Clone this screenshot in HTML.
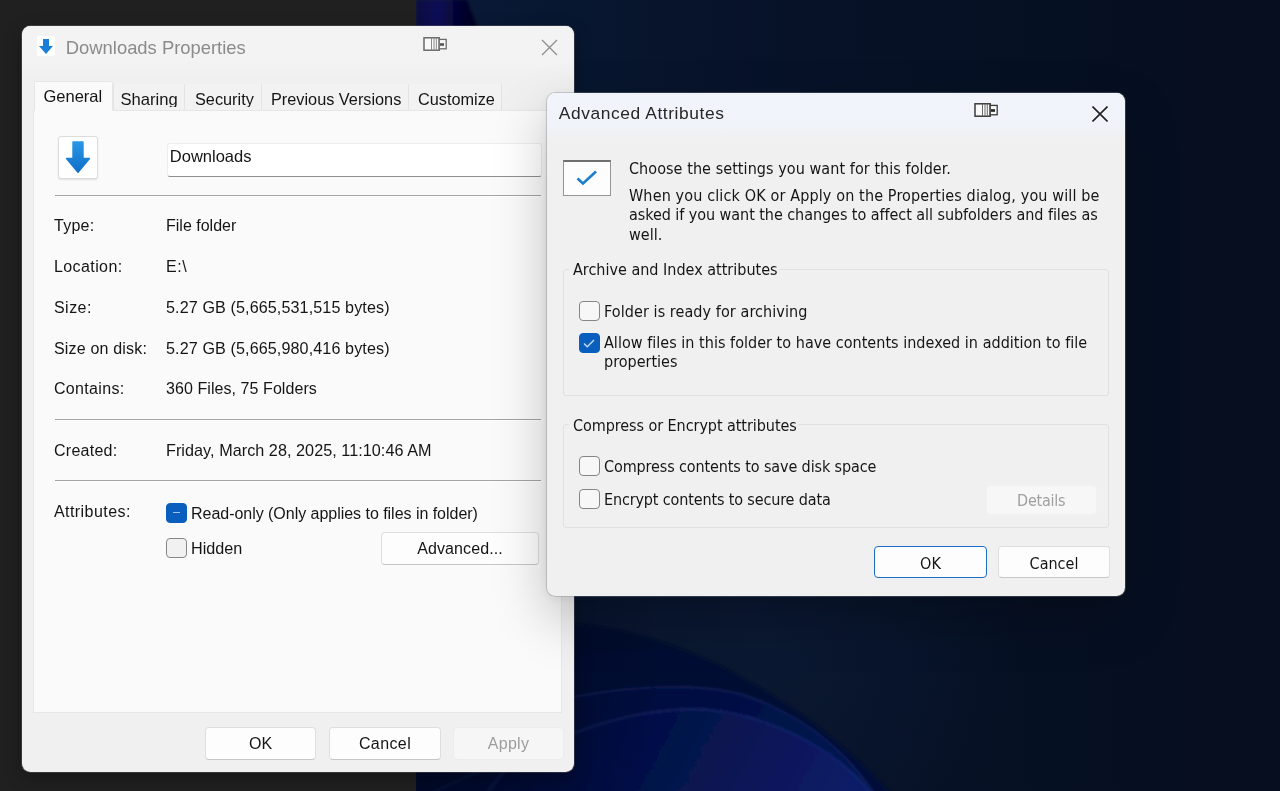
<!DOCTYPE html>
<html lang="en">
<head>
<meta charset="utf-8">
<title>Downloads Properties</title>
<style>
html,body{margin:0;padding:0;}
body{width:1280px;height:791px;overflow:hidden;position:relative;background:#202020;font-family:"Liberation Sans",sans-serif;font-size:16px;color:#151515;}
.abs{position:absolute;}
#wall{position:absolute;left:416px;top:0;width:864px;height:791px;background:#061025;overflow:hidden;}
.t{position:absolute;white-space:nowrap;line-height:20px;font-size:16px;}
.tv{font-family:"DejaVu Sans Condensed","DejaVu Sans",sans-serif;font-stretch:condensed;}
/* properties dialog */
#prop{will-change:transform;position:absolute;left:22px;top:26px;width:552px;height:746px;background:#f0f0f0;border-radius:8.500px;box-shadow:0 0 0 1px rgba(128,128,128,.30),0 6px 18px rgba(0,0,0,.32);overflow:hidden;}
#pane{position:absolute;left:11px;top:84px;width:529px;height:603px;background:#fafafa;border:1px solid #e6e6e6;box-sizing:border-box;}
.tab{position:absolute;top:58px;height:26px;border-left:1px solid #e4e4e4;box-sizing:border-box;background:#f2f2f2;}
.tab i{position:absolute;left:0;top:0;right:0;height:22.5px;overflow:hidden;font-style:normal;}
.tab .t{font-size:16.3px;}
.btn{position:absolute;box-sizing:border-box;background:#fdfdfd;border:1px solid #dedede;border-bottom-color:#c6c6c6;border-radius:4px;text-align:center;}
.cb{position:absolute;width:20.600px;height:20.200px;box-sizing:border-box;border-radius:4px;border:1.200px solid #868686;background:#f1f1f1;}
.cb.on{background:#0a5fbe;border-color:#0a5fbe;}
.hr{position:absolute;height:1px;background:#a3a3a3;left:33px;width:485.500px;box-shadow:0 1px 0 #fff;}
/* advanced dialog */
#adv{will-change:transform;position:absolute;left:547px;top:93px;width:578px;height:503px;background:#f0f0f0;border-radius:8.500px;box-shadow:0 0 0 1px rgba(125,130,140,.36),0 22px 54px rgba(0,0,0,.23),0 2px 12px rgba(0,0,0,.07);overflow:hidden;}
.grp{position:absolute;box-sizing:border-box;border:1px solid #e1e1e1;border-radius:3px;}
</style>
</head>
<body>
<div id="wall">
<svg width="864" height="791" viewBox="416 0 864 791" style="position:absolute;left:0;top:0">
<defs>
<linearGradient id="wbg" x1="0" y1="0" x2="1" y2="0"><stop offset="0" stop-color="#0a1a38"/><stop offset=".15" stop-color="#081731"/><stop offset=".35" stop-color="#07132a"/><stop offset=".6" stop-color="#061125"/><stop offset="1" stop-color="#060e1f"/></linearGradient>
<radialGradient id="wlt" gradientUnits="userSpaceOnUse" cx="760" cy="640" r="260"><stop offset="0" stop-color="#0c1b36" stop-opacity=".7"/><stop offset="1" stop-color="#0c1b36" stop-opacity="0"/></radialGradient>
<linearGradient id="wpur" gradientUnits="userSpaceOnUse" x1="416" y1="0" x2="476" y2="0"><stop offset="0" stop-color="#07073e"/><stop offset=".35" stop-color="#0b0b58"/><stop offset=".7" stop-color="#050534"/><stop offset="1" stop-color="#02021f"/></linearGradient>
<linearGradient id="wb1" x1="0" y1="0" x2="0.3" y2="1"><stop offset="0" stop-color="#050c2c"/><stop offset="1" stop-color="#060f38"/></linearGradient>
<linearGradient id="wb2" gradientUnits="userSpaceOnUse" x1="560" y1="670" x2="800" y2="830"><stop offset="0" stop-color="#040c36"/><stop offset="1" stop-color="#061450"/></linearGradient>
<linearGradient id="wb3" gradientUnits="userSpaceOnUse" x1="540" y1="690" x2="820" y2="840"><stop offset="0" stop-color="#040d3a"/><stop offset=".5" stop-color="#06124c"/><stop offset="1" stop-color="#091c66"/></linearGradient>
<linearGradient id="wdk" gradientUnits="userSpaceOnUse" x1="416" y1="0" x2="660" y2="0"><stop offset="0" stop-color="#02061c" stop-opacity=".6"/><stop offset="1" stop-color="#02061c" stop-opacity="0"/></linearGradient>
<filter id="bl" x="-10%" y="-10%" width="120%" height="120%"><feGaussianBlur stdDeviation="1.800"/></filter>
</defs>
<rect x="416" y="0" width="864" height="791" fill="url(#wbg)"/>
<rect x="416" y="380" width="864" height="411" fill="url(#wlt)"/>
<path d="M416 0H467L478 30V90H416z" fill="url(#wpur)" filter="url(#bl)"/>
<g filter="url(#bl)">
<path d="M416 640C470 620 560 617 620 630C700 648 770 690 820 728C850 752 875 775 892 795H416z" fill="url(#wb1)"/>
<path d="M416 760C480 725 540 705 574 697C610 690 640 687 672 687C700 687 725 690 740 694C770 703 795 718 813 730C840 750 860 772 875 795H416z" fill="url(#wb2)"/>
<path d="M416 760C480 725 540 705 574 697C610 690 640 687 672 687C700 687 725 690 740 694C770 703 795 718 813 730C840 750 860 772 875 795" fill="none" stroke="#2a48a8" stroke-width="1.5" opacity=".3"/>
<path d="M416 800C480 770 540 745 574 733C610 720 640 711 690 709C740 709 790 728 830 755C850 770 865 785 872 795H416z" fill="url(#wb3)"/>
<path d="M416 800C480 770 540 745 574 733C610 720 640 711 690 709C740 709 790 728 830 755C850 770 865 785 872 795" fill="none" stroke="#3555b8" stroke-width="1.500" opacity=".3"/>
</g>
<rect x="416" y="600" width="250" height="191" fill="url(#wdk)"/>
<path d="M488 791L530 740" stroke="#1a2a6a" stroke-width="3" opacity=".35" filter="url(#bl)"/>
</svg>
</div>

<div id="prop">
  <!-- title bar -->
  <div class="abs" style="left:0;top:0;width:552px;height:52px;background:linear-gradient(#f3f3f3 0,#f3f3f3 70%,#f0f0f0 100%)"></div>
  <div class="abs" style="left:15px;top:10px;width:18px;height:20px;background:#fff;border-radius:2px"></div>
  <svg class="abs" style="left:15px;top:10px" width="18" height="20" viewBox="0 0 18 20"><path d="M6 3h6v7h4l-7 8-7-8h4z" fill="#1a7fd6"/></svg>
  <div class="t" style="left:43.800px;top:12px;font-size:18.400px;color:#8b8b8b">Downloads Properties</div>
  <svg class="abs" style="left:400px;top:10px" width="26" height="16" viewBox="0 0 26 16"><rect x="2" y="1.800" width="15.200" height="12.400" fill="#fafafa" stroke="#6a6a6a" stroke-width="1.500"/><path d="M9.500 2v12M12 2v12M14.300 2v12" stroke="#8a8a8a" stroke-width="1" fill="none"/><rect x="17.200" y="3.400" width="7" height="9.400" fill="#f6f6f6" stroke="#6a6a6a" stroke-width="1.300"/><rect x="18" y="7.200" width="4" height="2.600" fill="#555"/></svg>
  <svg class="abs" style="left:519px;top:13.300px" width="17" height="17" viewBox="0 0 17 17"><path d="M1 1l15 15M16 1L1 16" stroke="#8d8d8d" stroke-width="1.3" fill="none"/></svg>

  <!-- tabs -->
  <div class="tab" style="left:91px;width:71px"><i><span class="t" style="left:6.500px;top:5.700px;font-size:16.600px">Sharing</span></i></div>
  <div class="tab" style="left:162px;width:77px"><i><span class="t" style="left:10px;top:4.700px">Security</span></i></div>
  <div class="tab" style="left:239px;width:147px"><i><span class="t" style="left:9px;top:4.700px">Previous Versions</span></i></div>
  <div class="tab" style="left:386px;width:94px;border-right:1px solid #e2e2e2"><i><span class="t" style="left:9px;top:4.700px">Customize</span></i></div>
  <div id="pane"></div>
  <div class="abs" style="left:12px;top:55px;width:79px;height:30px;background:#fafafa;border:1px solid #e6e6e6;border-bottom:none;box-sizing:border-box;border-radius:2px 2px 0 0"></div>
  <div class="t" style="left:21.500px;top:59.700px;font-size:16.500px">General</div>

  <!-- icon + name -->
  <div class="abs" style="left:36px;top:109.500px;width:40px;height:43px;background:#fff;border:1px solid #dcdcdc;border-radius:3px;box-sizing:border-box;box-shadow:0 1px 1.500px rgba(0,0,0,.10)"></div>
  <svg class="abs" style="left:36px;top:109.500px" width="40" height="43" viewBox="0 0 40 43"><defs><linearGradient id="ag" x1="0" y1="0" x2="0" y2="1"><stop offset="0" stop-color="#2a96e6"/><stop offset="1" stop-color="#0f6fc8"/></linearGradient></defs><path d="M15 6h10v16.500h6.500L20 36.300 8.500 22.500h6.500z" fill="url(#ag)" stroke="url(#ag)" stroke-width="1.400" stroke-linejoin="round"/></svg>
  <div class="abs" style="left:144.500px;top:116.500px;width:375.500px;height:34.500px;background:#fff;border:1px solid #ededed;border-bottom:1px solid #8f8f8f;border-radius:3px;box-sizing:border-box"></div>
  <div class="t" style="left:147.800px;top:120.300px;font-size:16.500px">Downloads</div>
  <div class="hr" style="top:168.500px"></div>

  <div class="t" style="left:32px;top:190px;letter-spacing:0.25px">Type:</div>
  <div class="t" style="left:144px;top:190px">File folder</div>
  <div class="t" style="left:32px;top:230.500px;letter-spacing:0.4px">Location:</div>
  <div class="t" style="left:144px;top:230.500px;letter-spacing:0.6px">E:\</div>
  <div class="t" style="left:32px;top:272px;letter-spacing:0.45px">Size:</div>
  <div class="t" style="left:144px;top:271px;font-size:16.15px;letter-spacing:0.1px">5.27 GB (5,665,531,515 bytes)</div>
  <div class="t" style="left:32px;top:313px;letter-spacing:0.18px">Size on disk:</div>
  <div class="t" style="left:144px;top:312px;font-size:16.15px;letter-spacing:0.1px">5.27 GB (5,665,980,416 bytes)</div>
  <div class="t" style="left:32px;top:352.500px;letter-spacing:0.32px">Contains:</div>
  <div class="t" style="left:144px;top:352.500px;letter-spacing:0.07px">360 Files, 75 Folders</div>
  <div class="hr" style="top:393px"></div>
  <div class="t" style="left:32px;top:415px;letter-spacing:0.25px">Created:</div>
  <div class="t" style="left:144px;top:414px;font-size:16.2px;letter-spacing:0.045px">Friday, March 28, 2025, 11:10:46 AM</div>
  <div class="hr" style="top:454px"></div>
  <div class="t" style="left:32px;top:476px;letter-spacing:0.43px">Attributes:</div>
  <div class="cb on" style="left:144px;top:476.700px;width:20.800px;height:20.200px"></div>
  <div class="abs" style="left:150.500px;top:486.400px;width:7.500px;height:1px;background:rgba(255,255,255,.62)"></div>
  <div class="t" style="left:169px;top:478px;letter-spacing:-.03px">Read-only (Only applies to files in folder)</div>
  <div class="cb" style="left:144px;top:512px;width:20.800px;height:20.200px"></div>
  <div class="t" style="left:169px;top:512.400px;font-size:16.200px">Hidden</div>
  <div class="btn" style="left:359px;top:506px;width:158px;height:33px"><div class="t" style="left:0;right:0;top:6px;letter-spacing:.1px">Advanced...</div></div>

  <!-- bottom buttons -->
  <div class="btn" style="left:183px;top:701px;width:111px;height:33px"><div class="t" style="left:0;right:0;top:5.500px">OK</div></div>
  <div class="btn" style="left:307px;top:701px;width:112px;height:33px"><div class="t" style="left:0;right:0;top:5.500px;letter-spacing:.4px">Cancel</div></div>
  <div class="btn" style="left:431px;top:701px;width:111px;height:33px;background:#f6f6f6;border-color:#ececec"><div class="t" style="left:0;right:0;top:5.500px;color:#9d9d9d;letter-spacing:.25px">Apply</div></div>
</div>

<div id="adv">
  <div class="abs" style="left:0;top:0;width:578px;height:46px;background:linear-gradient(#f1f4fa 0,#f0f3f9 70%,#f0f0f0 100%)"></div>
  <div class="t" style="left:11.800px;top:10.400px;font-size:17.400px;color:#262626;letter-spacing:.58px">Advanced Attributes</div>
  <svg class="abs" style="left:426px;top:9px" width="26" height="16" viewBox="0 0 26 16"><rect x="2" y="1.800" width="15.200" height="12.400" fill="#fafafa" stroke="#3a3a3a" stroke-width="1.500"/><path d="M9.500 2v12M12 2v12M14.300 2v12" stroke="#6a6a6a" stroke-width="1" fill="none"/><rect x="17.200" y="3.400" width="7" height="9.400" fill="#f6f6f6" stroke="#3a3a3a" stroke-width="1.300"/><rect x="18" y="7.200" width="4" height="2.600" fill="#222"/></svg>
  <svg class="abs" style="left:545px;top:13px" width="16" height="16" viewBox="0 0 16 16"><path d="M.500 .500l15 15M15.500 .500L.500 15.500" stroke="#1f1f1f" stroke-width="1.600" fill="none"/></svg>

  <div class="abs" style="left:16px;top:67px;width:48px;height:36px;background:#fdfdfd;border:1px solid #959595;border-top:2px solid #6f6f6f;box-sizing:border-box"></div>
  <svg class="abs" style="left:16px;top:67px" width="48" height="36" viewBox="0 0 48 36"><path d="M14.500 18.500l5.500 5L33 11.500" fill="none" stroke="#1b7fce" stroke-width="2.700"/></svg>

  <div class="t tv" style="left:82px;top:65.500px;letter-spacing:0.067px">Choose the settings you want for this folder.</div>
  <div class="t tv" style="left:82px;top:93px;letter-spacing:0.137px">When you click OK or Apply on the Properties dialog, you will be</div>
  <div class="t tv" style="left:82px;top:112.300px;letter-spacing:-0.054px">asked if you want the changes to affect all subfolders and files as</div>
  <div class="t tv" style="left:82px;top:131.600px">well.</div>

  <div class="grp" style="left:16px;top:176px;width:546px;height:127px"></div>
  <div class="t tv" style="left:22px;top:167px;background:#f0f0f0;padding:0 1px 0 4px">Archive and Index attributes</div>
  <div class="cb" style="left:32px;top:208px;background:#f7f7f7"></div>
  <div class="t tv" style="left:57px;top:208.500px;letter-spacing:0.08px">Folder is ready for archiving</div>
  <div class="cb on" style="left:32px;top:240px"></div>
  <svg class="abs" style="left:32px;top:240px" width="20" height="20" viewBox="0 0 20 20"><path d="M5 10.500l3.300 3.300L15 7" fill="none" stroke="#c4dbf4" stroke-width="1.400"/></svg>
  <div class="t tv" style="left:57px;top:240px;letter-spacing:0.028px">Allow files in this folder to have contents indexed in addition to file</div>
  <div class="t tv" style="left:57px;top:259px">properties</div>

  <div class="grp" style="left:16px;top:331px;width:546px;height:104px"></div>
  <div class="t tv" style="left:22px;top:322.500px;background:#f0f0f0;padding:0 1px 0 4px;letter-spacing:-0.06px">Compress or Encrypt attributes</div>
  <div class="cb" style="left:32px;top:363px;background:#f7f7f7"></div>
  <div class="t tv" style="left:57px;top:363.500px;letter-spacing:-0.11px">Compress contents to save disk space</div>
  <div class="cb" style="left:32px;top:396px;background:#f7f7f7"></div>
  <div class="t tv" style="left:57px;top:397px;letter-spacing:-0.14px">Encrypt contents to secure data</div>
  <div class="btn" style="left:438.500px;top:392.300px;width:111.300px;height:29.700px;background:#f7f7f7;border-color:#f1f1f1"><div class="t tv" style="left:0;right:0;top:5px;color:#a0a0a0;letter-spacing:-.25px">Details</div></div>

  <div class="btn" style="left:327px;top:453px;width:113px;height:32px;border-color:#1a6fc4"><div class="t tv" style="left:0;right:0;top:6.800px">OK</div></div>
  <div class="btn" style="left:451px;top:453px;width:112px;height:32px"><div class="t tv" style="left:0;right:0;top:6.800px">Cancel</div></div>
</div>
</body>
</html>
